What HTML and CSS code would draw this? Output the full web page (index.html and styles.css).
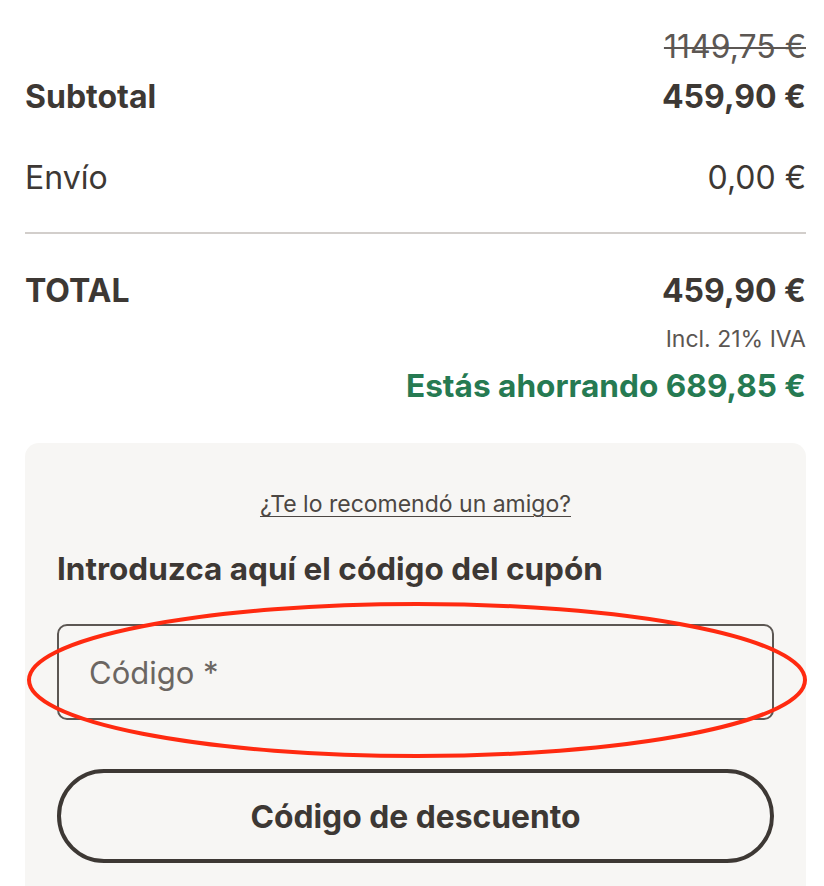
FILE: index.html
```html
<!DOCTYPE html>
<html lang="es">
<head>
<meta charset="utf-8">
<link rel="stylesheet" href="styles.css">
</head>
<body>
<div class="page">
  <div class="summary">
    <div class="old-price"><s>1149,75 €</s></div>
    <div class="row row-sub">
      <span class="label bold">Subtotal</span>
      <span class="value bold">459,90 €</span>
    </div>
    <div class="row row-ship">
      <span class="label">Envío</span>
      <span class="value">0,00 €</span>
    </div>
    <div class="divider"></div>
    <div class="row row-total">
      <span class="label bold">TOTAL</span>
      <span class="value bold">459,90 €</span>
    </div>
    <div class="tax">Incl. 21% IVA</div>
    <div class="saving">Estás ahorrando 689,85 €</div>
  </div>
  <div class="card">
    <a class="friend" href="#">¿Te lo recomendó un amigo?</a>
    <h2 class="coupon-title">Introduzca aquí el código del cupón</h2>
    <div class="field">
      <input class="code-input" type="text" placeholder="Código *">
    </div>
    <button class="btn" type="button">Código de descuento</button>
  </div>
  <svg class="annot" width="824" height="886" viewBox="0 0 824 886">
    <ellipse cx="417" cy="680" rx="388" ry="76" fill="none" stroke="#ff2a10" stroke-width="4"/>
  </svg>
</div>
</body>
</html>
```
FILE: styles.css
```css
* { box-sizing: border-box; }
html, body { margin: 0; padding: 0; background: #fff; }
body {
  font-family: Inter, "Noto Sans", "Liberation Sans", sans-serif;
  color: #3d3834;
  width: 824px;
  height: 886px;
  overflow: hidden;
}
.page { position: relative; width: 824px; height: 886px; }
.summary { padding: 28px 18px 0 25px; }
.old-price {
  text-align: right;
  font-size: 32px;
  line-height: 38px;
  color: #5c5753;
}
.old-price s { text-decoration-thickness: 2px; }
.row {
  display: flex;
  justify-content: space-between;
  align-items: center;
  font-size: 32px;
  line-height: 38px;
}
.bold { font-weight: 700; }
.row-sub { margin-top: 12px; }
.row-ship { margin-top: 43px; }
.divider { height: 2px; background: #d2cecb; margin-top: 35px; }
.row-total { margin-top: 38px; }
.tax {
  text-align: right;
  font-size: 23px;
  line-height: 30px;
  color: #5b5652;
  margin-top: 14px;
}
.saving {
  text-align: right;
  font-size: 31.6px;
  line-height: 38px;
  font-weight: 700;
  color: #267a52;
  margin-top: 13px;
}
.card {
  margin: 38px 18px 0 25px;
  background: #f7f6f4;
  border-radius: 14px 14px 0 0;
  padding: 46px 32px 40px 32px;
  display: flex;
  flex-direction: column;
  height: 460px;
}
.friend {
  align-self: center;
  font-size: 23px;
  line-height: 30px;
  color: #4c4743;
  text-decoration: underline;
  text-decoration-thickness: 1px;
  text-underline-offset: 4px;
}
.coupon-title {
  margin: 31px 0 0 0;
  font-size: 31.5px;
  line-height: 38px;
  font-weight: 700;
  color: #3d3834;
}
.field { margin-top: 36px; }
.code-input {
  display: block;
  width: 100%;
  height: 96px;
  border: 2px solid #5c5753;
  border-radius: 10px;
  background: transparent;
  padding: 0 30px;
  font-family: inherit;
  font-size: 31px;
  color: #3d3834;
  outline: none;
}
.code-input::placeholder { color: #6b6662; opacity: 1; }
.btn {
  margin-top: 49px;
  width: 100%;
  height: 97px;
  border: 4px solid #3d3834;
  border-radius: 49px;
  background: transparent;
  font-family: inherit;
  font-size: 31.8px;
  font-weight: 700;
  color: #3d3834;
}
.annot { position: absolute; left: 0; top: 0; pointer-events: none; }
```
